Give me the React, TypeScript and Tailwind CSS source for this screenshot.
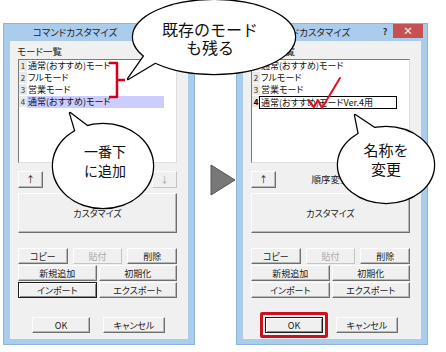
import React from "react";

const ui = "font-['Noto_Sans_CJK_JP',sans-serif] [font-feature-settings:'palt']";

interface BtnProps {
  label: string;
  className?: string;
  variant?: "normal" | "default" | "disabled";
}

const Btn: React.FC<BtnProps> = ({ label, className = "", variant = "normal" }) => {
  const look =
    variant === "default"
      ? "border-[#1c1c1c] shadow-[inset_1px_1px_0_#fff,inset_-1px_-1px_0_#8a8a8a] text-[#1a1a1a]"
      : variant === "disabled"
        ? "border-t-[#fdfdfd] border-l-[#fdfdfd] border-r-[#c4c4c4] border-b-[#c4c4c4] text-[#a9a9a9]"
        : "border-t-[#fdfdfd] border-l-[#fdfdfd] border-r-[#6e6e6e] border-b-[#6e6e6e] shadow-[inset_-1px_-1px_0_#b8b8b8] text-[#1a1a1a]";
  return (
    <div
      className={`flex items-center justify-center bg-[#f0f0f0] border text-[9px] leading-none ${look} ${className}`}
    >
      {label}
    </div>
  );
};

const modes = ["通常(おすすめ)モード", "フルモード", "営業モード"];

const Num: React.FC<{ n: number; bold?: boolean }> = ({ n, bold }) => (
  <div
    className={`w-[8px] shrink-0 bg-[#e9e9e9] border-b border-white flex items-center justify-center text-[8px] text-[#333] ${
      bold ? "font-bold text-black" : ""
    }`}
  >
    {n}
  </div>
);

const Dialog: React.FC<{ edited?: boolean }> = ({ edited }) => (
  <div className="w-[192px] h-[322px] bg-[#aacdee] border border-[#8fb3da] flex flex-col">
    <div className="h-[17px] flex items-start">
      <div className="flex-1 text-center text-[9.5px] leading-[17px] text-[#222]">コマンドカスタマイズ</div>
      <div className="w-[12px] text-center text-[9px] font-bold leading-[15px] text-[#333]">?</div>
      <div className="ml-[2px] mr-[4px] w-[30px] h-[14px] bg-[#c75050] flex items-center justify-center text-white text-[10px] font-bold leading-none">
        ×
      </div>
    </div>

    <div className="mx-[6px] h-[298px] bg-[#f0f0f0] pl-[8px] pr-[11px] flex flex-col">
      <div className="mt-[4px] h-[12px] -ml-[1px] text-[9.5px] leading-[12px] text-[#1a1a1a]">モード一覧</div>

      <div className="mt-[2px] h-[104px] bg-white border border-t-[#7a7a7a] border-l-[#7a7a7a] border-r-[#dedede] border-b-[#dedede] flex flex-col">
        {modes.map((m, i) => (
          <div key={m} className="flex h-[12px]">
            <Num n={i + 1} />
            <div className="pl-[1px] flex items-center text-[9px] text-[#111] whitespace-nowrap">{m}</div>
          </div>
        ))}
        <div className="flex h-[12px]">
          <Num n={4} bold={edited} />
          {edited ? (
            <div className="-ml-[1px] w-[138px] h-[13px] border-[1.5px] border-black flex items-center pl-[1px] text-[9px] text-[#111] whitespace-nowrap">
              通常(おすすめ)モードVer.4用
            </div>
          ) : (
            <div className="w-[137px] bg-[#ccccff] flex items-center pl-[1px] text-[9px] text-[#111] whitespace-nowrap">
              通常(おすすめ)モード
            </div>
          )}
        </div>
      </div>

      <div className="mt-[8px] h-[17px] flex items-center justify-between">
        <Btn label="↑" className="w-[25px] h-[17px]" />
        <span className="text-[9.5px] text-[#1a1a1a]">順序変更</span>
        <Btn label="↓" variant="disabled" className="w-[25px] h-[17px]" />
      </div>

      <Btn label="カスタマイズ" className="mt-[5px] h-[40px] text-[9.5px]" />

      <div className="mt-[15px] grid grid-cols-3 gap-x-[5px]">
        <Btn label="コピー" className="h-[16px]" />
        <Btn label="貼付" variant="disabled" className="h-[16px]" />
        <Btn label="削除" className="h-[16px]" />
      </div>
      <div className="mt-[1px] grid grid-cols-2 gap-x-[2px]">
        <Btn label="新規追加" className="h-[16px]" />
        <Btn label="初期化" className="h-[16px]" />
      </div>
      <div className="mt-[1px] grid grid-cols-2 gap-x-[2px]">
        <Btn label="インポート" variant={edited ? "normal" : "default"} className="h-[16px]" />
        <Btn label="エクスポート" className="h-[16px]" />
      </div>

      <div className="mt-[19px] flex">
        {edited ? (
          <div className="ml-[9px] -my-[5px] p-[2px] border-[3px] border-[#cc1020] rounded-[2px]">
            <Btn label="OK" variant="default" className="w-[58px] h-[16px]" />
          </div>
        ) : (
          <Btn label="OK" className="ml-[14px] w-[58px] h-[16px]" />
        )}
        <Btn label="キャンセル" className={`${edited ? "ml-[8px]" : "ml-[13px]"} w-[62px] h-[16px]`} />
      </div>
    </div>
  </div>
);

export default function App() {
  return (
    <div className={`relative w-[446px] h-[352px] overflow-hidden bg-white ${ui}`}>
      <div className="flex items-start pt-[23px] pl-[3px]">
        <Dialog />
        <svg width="26" height="32" viewBox="0 0 26 32" className="ml-[15px] mt-[141px]">
          <polygon points="1,1 25,16 1,31" fill="#787878" stroke="#555" strokeWidth="1" />
        </svg>
        <Dialog edited />
      </div>

      <svg className="absolute inset-0 pointer-events-none" width="446" height="352" viewBox="0 0 446 352">
        <path d="M109 63 H117 V97 H109 M117 80 H125" fill="none" stroke="#d4001a" strokeWidth="2.5" strokeLinejoin="round" />
        <path d="M308 100 L314 107 L318 100 L322 108 L340 78" fill="none" stroke="#e0101f" strokeWidth="2" strokeLinecap="round" strokeLinejoin="round" />

        <g stroke="#000" strokeWidth="2.5" strokeLinejoin="round">
          <ellipse cx="214" cy="37" rx="81" ry="37" fill="#fff" />
          <polygon points="128,79 147,52 158,61" fill="#fff" />
          <ellipse cx="103" cy="166" rx="50" ry="42" fill="#fff" />
          <polygon points="70,113 78,140 95,132" fill="#fff" />
          <ellipse cx="386" cy="165" rx="48" ry="38" fill="#fff" />
          <polygon points="355,115 362,150 385,135" fill="#fff" />
        </g>
        <g fill="#fff">
          <ellipse cx="214" cy="37" rx="81" ry="37" />
          <polygon points="128,79 147,52 158,61" />
          <ellipse cx="103" cy="166" rx="50" ry="42" />
          <polygon points="70,113 78,140 95,132" />
          <ellipse cx="386" cy="165" rx="48" ry="38" />
          <polygon points="355,115 362,150 385,135" />
        </g>
      </svg>

      <div className="absolute left-[130px] top-[20px] w-[160px] text-center text-[16px] leading-[18px] text-[#111] [font-feature-settings:normal]">
        既存のモード
        <br />
        も残る
      </div>
      <div className="absolute left-[55px] top-[142px] w-[100px] text-center text-[14px] leading-[19px] text-[#111] [font-feature-settings:normal]">
        一番下
        <br />
        に追加
      </div>
      <div className="absolute left-[336px] top-[140px] w-[100px] text-center text-[15px] leading-[19px] text-[#111] [font-feature-settings:normal]">
        名称を
        <br />
        変更
      </div>
    </div>
  );
}
